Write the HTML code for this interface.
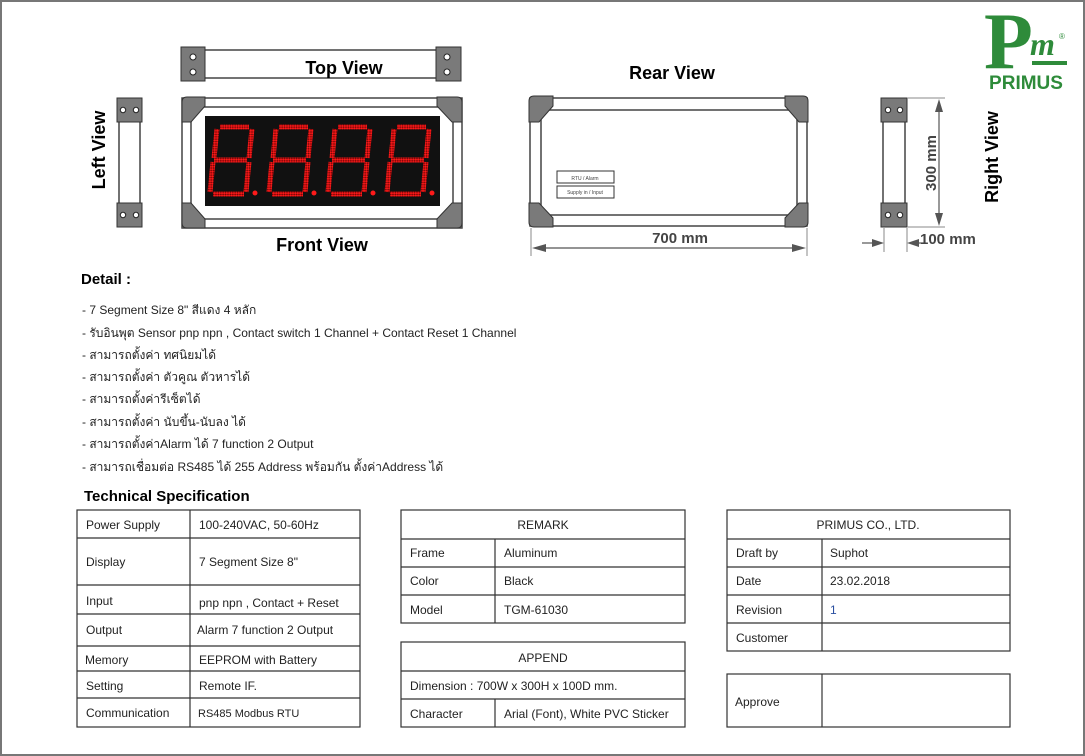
<!DOCTYPE html>
<html><head><meta charset="utf-8"><style>
html,body{margin:0;padding:0;background:#fff}
svg{display:block}
text{font-family:"Liberation Sans","Noto Sans CJK SC",sans-serif}
text.serif{font-family:"Liberation Serif",serif}
</style></head><body>
<svg width="1085" height="756" viewBox="0 0 1085 756" xmlns="http://www.w3.org/2000/svg">
<defs>
<pattern id="dots" width="2.4" height="2.4" patternUnits="userSpaceOnUse"><rect width="2.4" height="2.4" fill="#600000"/><circle cx="1.2" cy="1.2" r="1.1" fill="#ff1a1a"/></pattern>
</defs>
<rect x="1" y="1" width="1083" height="754" fill="#fff" stroke="#777" stroke-width="2"/>

<!-- Top view -->
<rect x="190" y="50" width="260" height="28" fill="#fff" stroke="#444" stroke-width="1.5"/>
<rect x="181" y="47" width="24" height="34" fill="#7a7a7a" stroke="#333"/>
<circle cx="193" cy="57" r="3" fill="#fff" stroke="#222"/><circle cx="193" cy="72" r="3" fill="#fff" stroke="#222"/>
<rect x="436" y="47" width="25" height="34" fill="#7a7a7a" stroke="#333"/>
<circle cx="447" cy="57" r="3" fill="#fff" stroke="#222"/><circle cx="447" cy="72" r="3" fill="#fff" stroke="#222"/>
<text x="344" y="74" font-size="18" font-weight="bold" text-anchor="middle">Top View</text>

<!-- Left view -->
<rect x="119" y="110" width="21" height="105" fill="#fff" stroke="#444" stroke-width="1.5"/>
<rect x="117" y="98" width="25" height="24" fill="#7a7a7a" stroke="#333"/>
<circle cx="123" cy="110" r="2.7" fill="#fff" stroke="#222"/><circle cx="136" cy="110" r="2.7" fill="#fff" stroke="#222"/>
<rect x="117" y="203" width="25" height="24" fill="#7a7a7a" stroke="#333"/>
<circle cx="123" cy="215" r="2.7" fill="#fff" stroke="#222"/><circle cx="136" cy="215" r="2.7" fill="#fff" stroke="#222"/>
<text transform="translate(105,150) rotate(-90)" font-size="18" font-weight="bold" text-anchor="middle">Left View</text>

<!-- Front view -->
<rect x="182" y="98" width="280" height="130" fill="#fff" stroke="#444" stroke-width="1.5"/>
<rect x="191" y="107" width="262" height="112" fill="#fff" stroke="#444" stroke-width="1.5"/>
<rect x="205" y="116" width="235" height="90" fill="#111"/>
<g fill="#7a7a7a" stroke="#333">
<path d="M187,97 H205 V106 L191,122 H182 V102 Q182,97 187,97 Z"/>
<path d="M457,97 H437 V106 L452,122 H462 V102 Q462,97 457,97 Z"/>
<path d="M187,228 H205 V219 L191,203 H182 V223 Q182,228 187,228 Z"/>
<path d="M457,228 H437 V219 L452,203 H462 V223 Q462,228 457,228 Z"/>
</g>
<g stroke="url(#dots)" stroke-width="5" fill="none">
<path id="d0" d="M220,127 H249 M217,129 L214,158 M252,129 L249,158 M214,160 H247 M213,162 L210,192 M249,162 L246,192 M213,194 H244"/>
<use href="#d0" x="59"/><use href="#d0" x="118"/><use href="#d0" x="177"/>
</g>
<g fill="#ff1a1a"><circle cx="255" cy="193" r="2.5"/><circle cx="314" cy="193" r="2.5"/><circle cx="373" cy="193" r="2.5"/><circle cx="432" cy="193" r="2.5"/></g>
<text x="322" y="251" font-size="18" font-weight="bold" text-anchor="middle">Front View</text>

<!-- Rear view -->
<text x="672" y="79" font-size="18" font-weight="bold" text-anchor="middle">Rear View</text>
<rect x="530" y="98" width="277" height="128" fill="#fff" stroke="#444" stroke-width="1.5"/>
<rect x="541" y="110" width="256" height="105" fill="#fff" stroke="#444" stroke-width="1.5"/>
<g fill="#7a7a7a" stroke="#333">
<path d="M534,96 H553 V106 L539,122 H529 V101 Q529,96 534,96 Z"/>
<path d="M803,96 H785 V106 L799,122 H808 V101 Q808,96 803,96 Z"/>
<path d="M534,227 H553 V218 L539,203 H529 V222 Q529,227 534,227 Z"/>
<path d="M803,227 H785 V218 L799,203 H808 V222 Q808,227 803,227 Z"/>
</g>
<rect x="557" y="171" width="57" height="12" fill="#fff" stroke="#333"/>
<text x="585" y="180" font-size="5" text-anchor="middle" fill="#444">RTU / Alarm</text>
<rect x="557" y="186" width="57" height="12" fill="#fff" stroke="#333"/>
<text x="585" y="194" font-size="5" text-anchor="middle" fill="#444">Supply in / Input</text>
<line x1="531" y1="228" x2="531" y2="256" stroke="#888"/><line x1="807" y1="228" x2="807" y2="256" stroke="#888"/>
<line x1="540" y1="248" x2="798" y2="248" stroke="#555" stroke-width="1.2"/>
<path d="M532,248 L546,244 V252 Z M806,248 L792,244 V252 Z" fill="#555"/>
<text x="680" y="243" font-size="15" font-weight="bold" fill="#444" text-anchor="middle">700 mm</text>

<!-- Right view -->
<rect x="883" y="110" width="22" height="105" fill="#fff" stroke="#444" stroke-width="1.5"/>
<rect x="881" y="98" width="26" height="24" fill="#7a7a7a" stroke="#333"/>
<circle cx="888" cy="110" r="2.7" fill="#fff" stroke="#222"/><circle cx="900" cy="110" r="2.7" fill="#fff" stroke="#222"/>
<rect x="881" y="203" width="26" height="24" fill="#7a7a7a" stroke="#333"/>
<circle cx="888" cy="215" r="2.7" fill="#fff" stroke="#222"/><circle cx="900" cy="215" r="2.7" fill="#fff" stroke="#222"/>
<line x1="907" y1="98" x2="945" y2="98" stroke="#888"/><line x1="907" y1="227" x2="945" y2="227" stroke="#888"/>
<line x1="939" y1="106" x2="939" y2="219" stroke="#555" stroke-width="1.2"/>
<path d="M939,99 L935,112 H943 Z M939,226 L935,213 H943 Z" fill="#555"/>
<text transform="translate(936,163) rotate(-90)" font-size="15" font-weight="bold" fill="#444" text-anchor="middle">300 mm</text>
<text transform="translate(998,157) rotate(-90)" font-size="18" font-weight="bold" text-anchor="middle">Right View</text>
<line x1="884" y1="228" x2="884" y2="252" stroke="#888"/><line x1="907" y1="228" x2="907" y2="252" stroke="#888"/>
<line x1="862" y1="243" x2="878" y2="243" stroke="#555" stroke-width="1.2"/>
<path d="M884,243 L872,239 V247 Z M907,243 L919,239 V247 Z" fill="#555"/>
<line x1="915" y1="243" x2="925" y2="243" stroke="#555" stroke-width="1.2"/>
<text x="920" y="244" font-size="15" font-weight="bold" fill="#444">100 mm</text>

<!-- Logo -->
<text class="serif" x="984" y="68" font-size="80" font-weight="bold" fill="#2e8b3a">P</text>
<text class="serif" x="1030" y="55" font-size="32" font-style="italic" font-weight="bold" fill="#2e8b3a">m</text>
<rect x="1032" y="61" width="35" height="4" fill="#2e8b3a"/>
<text x="1059" y="39" font-size="8" fill="#2e8b3a">®</text>
<text x="1026" y="89" font-size="19" font-weight="bold" fill="#2e8b3a" text-anchor="middle">PRIMUS</text>

<!-- Detail -->
<text x="81" y="284" font-size="15" font-weight="bold">Detail :</text>
<g font-size="12" fill="#222">
<text x="82" y="314">- 7 Segment Size 8" สีแดง 4 หลัก</text>
<text x="82" y="337">- รับอินพุต Sensor pnp npn , Contact switch 1 Channel + Contact Reset 1 Channel</text>
<text x="82" y="359">- สามารถตั้งค่า ทศนิยมได้</text>
<text x="82" y="381">- สามารถตั้งค่า ตัวคูณ ตัวหารได้</text>
<text x="82" y="403">- สามารถตั้งค่ารีเซ็ตได้</text>
<text x="82" y="426">- สามารถตั้งค่า นับขึ้น-นับลง ได้</text>
<text x="82" y="448">- สามารถตั้งค่าAlarm ได้ 7 function 2 Output</text>
<text x="82" y="471">- สามารถเชื่อมต่อ RS485 ได้ 255 Address พร้อมกัน ตั้งค่าAddress ได้</text>
</g>
<text x="84" y="501" font-size="15" font-weight="bold">Technical Specification</text>

<!-- Tables -->
<g fill="none" stroke="#333" stroke-width="1.2">
<rect x="77" y="510" width="283" height="217"/>
<line x1="190" y1="510" x2="190" y2="727"/>
<path d="M77,538 H360 M77,585 H360 M77,614 H360 M77,646 H360 M77,671 H360 M77,698 H360"/>
<rect x="401" y="510" width="284" height="113"/>
<path d="M401,539 H685 M401,567 H685 M401,595 H685 M495,539 V623"/>
<rect x="401" y="642" width="284" height="85"/>
<path d="M401,671 H685 M401,699 H685 M495,699 V727"/>
<rect x="727" y="510" width="283" height="141"/>
<path d="M727,539 H1010 M727,567 H1010 M727,595 H1010 M727,623 H1010 M822,539 V651"/>
<rect x="727" y="674" width="283" height="53"/>
<line x1="822" y1="674" x2="822" y2="727"/>
</g>
<g font-size="12" fill="#222">
<text x="86" y="529">Power Supply</text><text x="199" y="529">100-240VAC, 50-60Hz</text>
<text x="86" y="566">Display</text><text x="199" y="566">7 Segment Size 8"</text>
<text x="86" y="605">Input</text><text x="199" y="607">pnp npn , Contact +  Reset</text>
<text x="86" y="634">Output</text><text x="197" y="634">Alarm 7 function 2 Output</text>
<text x="85" y="664">Memory</text><text x="199" y="664">EEPROM with Battery</text>
<text x="86" y="690">Setting</text><text x="199" y="690">Remote IF.</text>
<text x="86" y="717">Communication</text><text x="198" y="717" font-size="11">RS485 Modbus RTU</text>
<text x="543" y="529" text-anchor="middle">REMARK</text>
<text x="410" y="557">Frame</text><text x="504" y="557">Aluminum</text>
<text x="410" y="585">Color</text><text x="504" y="585">Black</text>
<text x="410" y="614">Model</text><text x="504" y="614">TGM-61030</text>
<text x="543" y="662" text-anchor="middle">APPEND</text>
<text x="410" y="690">Dimension : 700W x 300H x 100D mm.</text>
<text x="410" y="718">Character</text><text x="504" y="718">Arial (Font), White PVC Sticker</text>
<text x="868" y="529" text-anchor="middle">PRIMUS CO., LTD.</text>
<text x="736" y="557">Draft by</text><text x="830" y="557">Suphot</text>
<text x="736" y="585">Date</text><text x="830" y="585">23.02.2018</text>
<text x="736" y="614">Revision</text><text x="830" y="614" fill="#2a4fa0">1</text>
<text x="736" y="642">Customer</text>
<text x="735" y="706">Approve</text>
</g>
</svg>
</body></html>
